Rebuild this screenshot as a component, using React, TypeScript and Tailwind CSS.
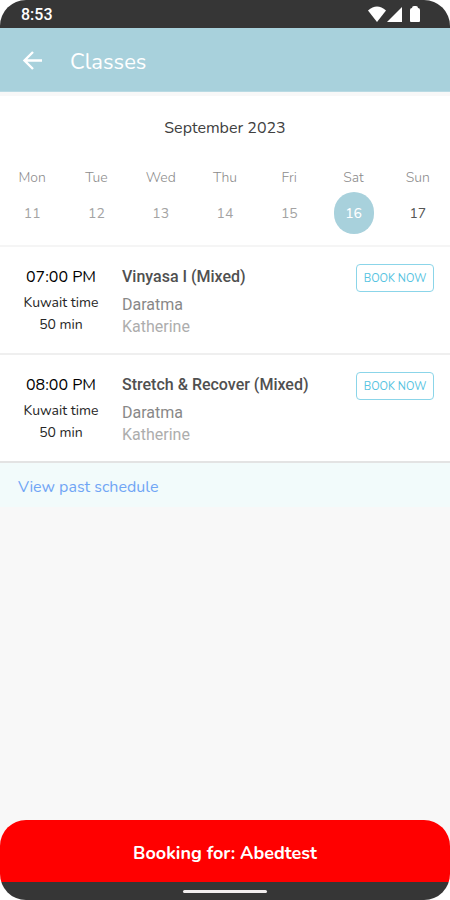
import React from "react";

type Day = { name: string; date: number; tone: string };

const days: Day[] = [
  { name: "Mon", date: 11, tone: "text-[#a3a3a3]" },
  { name: "Tue", date: 12, tone: "text-[#a3a3a3]" },
  { name: "Wed", date: 13, tone: "text-[#a3a3a3]" },
  { name: "Thu", date: 14, tone: "text-[#a3a3a3]" },
  { name: "Fri", date: 15, tone: "text-[#a3a3a3]" },
  { name: "Sat", date: 16, tone: "bg-[#a8d1dc] font-medium text-white" },
  { name: "Sun", date: 17, tone: "text-[#555555]" },
];

const classes = [
  { time: "07:00 PM", title: "Vinyasa I (Mixed)", border: "border-[#efefef]" },
  { time: "08:00 PM", title: "Stretch & Recover (Mixed)", border: "border-[#e3e3e3]" },
];

function StatusBar() {
  return (
    <div className="flex h-7 items-center justify-between bg-[#363636] pr-7 pl-[21px] text-white">
      <span className="pt-0.5 font-[Roboto,sans-serif] text-base leading-5 font-medium">8:53</span>
      <svg width="54" height="18" viewBox="0 0 54 18" fill="white" aria-hidden="true">
        <path d="M0 5.500Q9 -2.500 18 5.500L9 17Z" />
        <path d="M34 2V17H19Z" />
        <path d="M44 3Q44 1 46 1H48Q50 1 50 3Q52 3 52 5V16Q52 17 51 17H43Q42 17 42 16V5Q42 3 44 3Z" />
      </svg>
    </div>
  );
}

function Header() {
  return (
    <header className="flex h-16 items-center gap-6 border-b border-[#b9dae3] bg-[#a8d1dc] px-[22px] text-white">
      <button type="button" aria-label="Back" className="flex w-6 items-center">
        <svg width="22" height="20" viewBox="0 0 22 20" fill="none" stroke="white" strokeWidth="2.4" aria-hidden="true">
          <path d="M20 10.500H3M11 2L2.500 10.500L11 19" />
        </svg>
      </button>
      <h1 className="pt-1 text-[22px] leading-8 font-normal">Classes</h1>
    </header>
  );
}

function Calendar() {
  return (
    <section className="border-t-4 border-b-2 border-t-[#f8f8f8] border-b-[#f5f5f5] bg-white pt-5 pb-[11px]">
      <h2 className="text-center text-base leading-6 text-[#404040]">September 2023</h2>
      <div className="grid grid-cols-7 pt-7">
        {days.map((d) => (
          <div key={d.name} className="flex flex-col items-center gap-1 text-sm">
            <span className="leading-5 font-light text-[#8c8c8c]">{d.name}</span>
            <button type="button" className={"flex h-[42px] w-10 items-center justify-center rounded-full pt-0.5 " + d.tone}>
              {d.date}
            </button>
          </div>
        ))}
      </div>
    </section>
  );
}

function ClassRow({ time, title, border }: (typeof classes)[number]) {
  return (
    <li className={"flex border-b-2 bg-white pt-4 pr-4 pb-[15px] " + border}>
      <div className="w-[122px] text-center text-sm text-[#262626]">
        <p className="text-base leading-7 text-black">{time}</p>
        <p className="leading-6">Kuwait time</p>
        <p className="leading-5">50 min</p>
      </div>
      <div className="flex-1 font-[Roboto,sans-serif] text-base">
        <h3 className="leading-7 font-medium text-[#505050]">{title}</h3>
        <p className="pt-[3px] leading-[22px] text-[#888888]">Daratma</p>
        <p className="leading-[22px] text-[#adadad]">Katherine</p>
      </div>
      <button
        type="button"
        className="mt-px h-7 w-[78px] rounded border border-[#8bd5e9] pt-0.5 text-[11px] text-[#56c3e1]"
      >
        BOOK NOW
      </button>
    </li>
  );
}

export default function App() {
  return (
    <div className="bg-white">
      <div className="flex min-h-screen flex-col overflow-hidden rounded-[26px] bg-[#f8f8f8] font-[Nunito,'Noto_Sans',sans-serif]">
        <StatusBar />
        <Header />
        <main className="flex-1">
          <Calendar />
          <ul>
            {classes.map((c) => (
              <ClassRow key={c.time} {...c} />
            ))}
          </ul>
          <div className="flex h-11 items-center bg-[#f2fbfb] px-[18px] pt-1">
            <a href="#past" className="text-base leading-6 text-[#70a5f5]">
              View past schedule
            </a>
          </div>
        </main>
        <button type="button" className="h-[62px] w-full rounded-t-[26px] bg-[#ff0000] pt-1 text-lg font-bold text-white">
          Booking for: Abedtest
        </button>
        <div className="flex h-[18px] items-center justify-center bg-[#363636]">
          <div className="h-[3px] w-[84px] rounded-full bg-[#f2eeee]" />
        </div>
      </div>
    </div>
  );
}
